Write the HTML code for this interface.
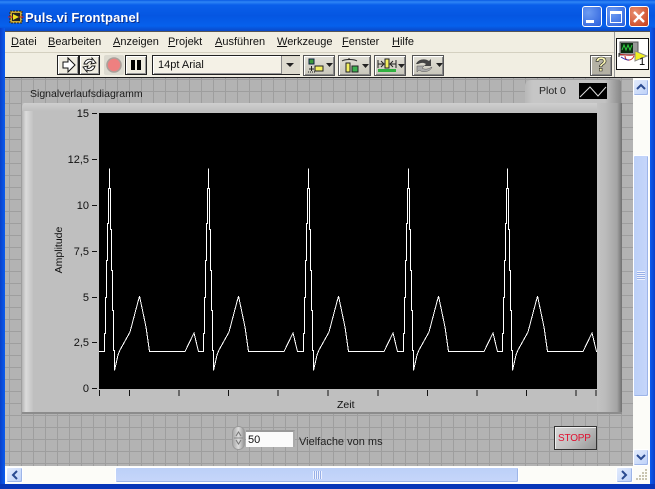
<!DOCTYPE html>
<html><head><meta charset="utf-8">
<style>
html,body{margin:0;padding:0;background:#0831d9}
#w{position:relative;width:655px;height:489px;overflow:hidden;background:#0a4fe0;font-family:"Liberation Sans",sans-serif;font-size:11px;color:#111}
#w div,#w span.a,#w svg{position:absolute}
.t{white-space:nowrap}
.btn{box-sizing:border-box;background:#efece0;border:1px solid #222;border-right-color:#222;box-shadow:inset 1px 1px 0 #fff,inset -1px -1px 0 #999}
.gb{box-sizing:border-box;background:linear-gradient(#e4e2d8,#c8c6ba);border:1px solid #555;box-shadow:inset 1px 1px 0 #fff,inset -1px -1px 0 #888}
.sb{box-sizing:border-box;background:linear-gradient(135deg,#e3ecfd,#bcd0f8);border:1px solid #fff;border-radius:2px;box-shadow:inset -1px -1px 0 #9db5e8}
u{text-decoration:underline}
</style></head><body>
<div id="w">
<!-- title -->
<div style="left:0;top:0;width:655px;height:31px;background:linear-gradient(#0a5ae4 0,#2f86f5 2px,#0a5fea 5px,#0556e2 16px,#0660ec 26px,#0a49c8 31px)"></div>
<div style="left:0;top:28px;width:5px;height:461px;background:linear-gradient(90deg,#0a3fc8,#0a5cf0)"></div>
<div style="left:650px;top:28px;width:5px;height:461px;background:linear-gradient(90deg,#0a5cf0,#0a3fc8)"></div>
<div style="left:0;top:484px;width:655px;height:5px;background:#0736b8"></div>
<svg style="left:8px;top:9px" width="16" height="16"><rect x="2" y="2" width="12" height="12" fill="#c8a838" stroke="#222" stroke-dasharray="2 1"/><rect x="4" y="4" width="8" height="8" fill="#222"/><path d="M5 5l6 3-6 3z" fill="#f0e020"/><path d="M0 8h5M11 8h5" stroke="#d02020"/></svg>
<div class="t" style="left:25px;top:10px;font-size:13px;font-weight:bold;color:#fff;letter-spacing:.1px;text-shadow:1px 1px 0 #0a2f90">Puls.vi Frontpanel</div>
<!-- window buttons -->
<div style="left:582px;top:6px;width:20px;height:21px;box-sizing:border-box;border:1px solid #fff;border-radius:3px;background:radial-gradient(circle at 30% 30%,#6d9cf2,#2a5fdc)"></div>
<div style="left:586px;top:20px;width:8px;height:3px;background:#fff"></div>
<div style="left:606px;top:6px;width:20px;height:21px;box-sizing:border-box;border:1px solid #fff;border-radius:3px;background:radial-gradient(circle at 30% 30%,#6d9cf2,#2a5fdc)"></div>
<div style="left:610px;top:11px;width:12px;height:12px;box-sizing:border-box;border:1px solid #fff;border-top-width:3px"></div>
<div style="left:629px;top:6px;width:20px;height:21px;box-sizing:border-box;border:1px solid #fff;border-radius:3px;background:radial-gradient(circle at 30% 30%,#e89070,#c83c18)"></div>
<svg style="left:629px;top:7px" width="20" height="20"><path d="M5 5l10 10M15 5L5 15" stroke="#fff" stroke-width="2.4"/></svg>
<!-- menu + toolbar -->
<div style="left:5px;top:31px;width:645px;height:47px;background:#f1eee2;border-top:1px solid #555;box-sizing:border-box"></div>
<div style="left:5px;top:52px;width:609px;height:1px;background:#d4d0c0"></div>
<div style="left:5px;top:77px;width:645px;height:1px;background:#222"></div>
<div style="left:614px;top:32px;width:1px;height:45px;background:#999"></div>
<div class="t" style="left:11px;top:36px"><u>D</u>atei</div>
<div class="t" style="left:48px;top:36px"><u>B</u>earbeiten</div>
<div class="t" style="left:113px;top:36px"><u>A</u>nzeigen</div>
<div class="t" style="left:168px;top:36px"><u>P</u>rojekt</div>
<div class="t" style="left:215px;top:36px"><u>A</u>usführen</div>
<div class="t" style="left:277px;top:36px"><u>W</u>erkzeuge</div>
<div class="t" style="left:342px;top:36px"><u>F</u>enster</div>
<div class="t" style="left:392px;top:36px"><u>H</u>ilfe</div>
<!-- run buttons -->
<div class="btn" style="left:57px;top:55px;width:22px;height:20px"></div>
<svg style="left:57px;top:55px" width="22" height="20"><path d="M6 7h5V3l7 7-7 7v-4H6z" fill="#fff" stroke="#111"/></svg>
<div class="btn" style="left:79px;top:55px;width:21px;height:20px"></div>
<svg style="left:79px;top:55px" width="21" height="20"><path d="M5 9c1-4 5-6 8-4V3l4 5-5 1 1-2c-2-1-4 0-5 2zM16 11c-1 4-5 6-8 4v2l-4-5 5-1-1 2c2 1 4 0 5-2z" fill="#fff" stroke="#111" stroke-width=".9"/></svg>
<div style="left:104px;top:55px;width:20px;height:20px;box-sizing:border-box;background:#dcdad0;border-radius:2px"></div>
<svg style="left:104px;top:55px" width="20" height="20"><circle cx="10" cy="10" r="7" fill="#ee8080" stroke="#aaa09a" stroke-width="1.6"/></svg>
<div class="btn" style="left:125px;top:55px;width:22px;height:20px"></div>
<div style="left:131px;top:60px;width:4px;height:10px;background:#000"></div>
<div style="left:137px;top:60px;width:4px;height:10px;background:#000"></div>
<!-- font combo -->
<div class="btn" style="left:152px;top:55px;width:148px;height:20px;background:#f4f1e6"></div>
<div class="t" style="left:158px;top:59px">14pt Arial</div>
<div style="left:281px;top:56px;width:18px;height:18px;background:#dedbcf;border-left:1px solid #888"></div>
<svg style="left:285px;top:62px" width="10" height="6"><path d="M1 1h8L5 5z" fill="#222"/></svg>
<!-- align buttons -->
<div class="gb" style="left:303px;top:55px;width:32px;height:21px"></div>
<svg style="left:303px;top:55px" width="32" height="21"><rect x="6" y="4" width="5" height="5" fill="#3c9a3c" stroke="#124"/><path d="M6 14h5M8.500 11v5" stroke="#222"/><path d="M5 17h8" stroke="#222" stroke-dasharray="1 1"/><rect x="12" y="11" width="8" height="5" fill="#f4f060" stroke="#222"/><path d="M23 8h7l-3.500 4z" fill="#222"/></svg>
<div class="gb" style="left:338px;top:55px;width:33px;height:21px"></div>
<svg style="left:338px;top:55px" width="33" height="21"><path d="M4 6c3-2 12-2 15 0M11 3v2" stroke="#222" fill="none"/><rect x="8" y="8" width="4" height="9" fill="#f4f060" stroke="#222"/><rect x="14" y="11" width="6" height="6" fill="#3cb050" stroke="#222"/><path d="M24 9h7l-3.500 4z" fill="#222"/></svg>
<div class="gb" style="left:374px;top:55px;width:32px;height:21px"></div>
<svg style="left:374px;top:55px" width="32" height="21"><path d="M4 9h5M17 9h5M7 6l3 3-3 3M19 6l-3 3 3 3M4 5v8M22 5v8" stroke="#222" fill="none"/><rect x="11" y="4" width="4" height="9" fill="#f4f060" stroke="#222"/><rect x="4" y="14" width="18" height="3" fill="#30b040"/><path d="M24 9h7l-3.500 4z" fill="#222"/></svg>
<div class="gb" style="left:412px;top:55px;width:32px;height:21px"></div>
<svg style="left:412px;top:55px" width="32" height="21"><path d="M4 9c2-5 9-6 13-3l2-2v7h-7l2-2c-3-2-6-1-8 0z" fill="#444"/><path d="M20 12c-2 5-9 6-13 3l-2 2v-6h7l-2 2c3 2 6 1 8 0z" fill="#aaa" stroke="#555" stroke-width=".5"/><path d="M24 8h7l-3.500 4z" fill="#222"/></svg>
<!-- help -->
<div class="gb" style="left:590px;top:55px;width:22px;height:21px;background:#b4b1a4"></div>
<div class="t" style="left:595px;top:54px;font-size:20px;color:#f8f4b0;font-weight:bold;-webkit-text-stroke:.6px #222">?</div>
<!-- VI icon -->
<div style="left:616px;top:38px;width:33px;height:32px;background:#fff;border:1px solid #111;box-sizing:border-box"></div>
<svg style="left:616px;top:38px" width="33" height="32"><rect x="4" y="4" width="18" height="13" fill="#999" stroke="#555"/><rect x="5" y="5" width="12" height="10" fill="#0a2a10"/><path d="M6 12l2-5 2 5 2-5 2 5 2-5" stroke="#30d040" fill="none"/><path d="M4 16.500c5 0 8 2 16 0M9 18c0 6 7 5 9 0" stroke="#c02020" fill="none"/><path d="M5 19c3 2 5 3 8 3" stroke="#3030b0" fill="none"/><path d="M19 13l12 5-12 5z" fill="#f0f020" stroke="#888"/><path d="M3 15v4" stroke="#222"/></svg>
<div class="t" style="left:639px;top:56px;font-size:11px;color:#000">1</div>
<!-- panel -->
<div style="left:5px;top:78px;width:628px;height:388px;background-color:#b3b3b3;background-image:linear-gradient(90deg,#9e9e9e 1px,transparent 1px),linear-gradient(#9e9e9e 1px,transparent 1px);background-size:12px 12px;background-position:4px 1px"></div>
<div class="t" style="left:30px;top:88px;font-size:10.500px;color:#1a1a1a">Signalverlaufsdiagramm</div>
<!-- legend -->
<div style="left:525px;top:80px;width:96px;height:23px;box-sizing:border-box;background:linear-gradient(90deg,#b8b8b8,#c6c6c6 8px,#c2c2c2 80px,#888);border-radius:6px 2px 0 0"></div>
<div class="t" style="left:539px;top:85px;font-size:10.500px;color:#222">Plot 0</div>
<div style="left:579px;top:83px;width:28px;height:16px;background:#000"></div>
<svg style="left:579px;top:83px" width="28" height="16"><path d="M1 14L11 4l8 9L27 4" stroke="#ddd" fill="none"/></svg>
<!-- chart frame -->
<div style="left:22px;top:103px;width:600px;height:311px;box-sizing:border-box;background:#bfbfbf;border-bottom:2px solid #8c8c8c"></div>
<div style="left:22px;top:103px;width:11px;height:309px;background:linear-gradient(90deg,#b4b4b4,#dcdcdc 4px,#c2c2c2)"></div>
<div style="left:22px;top:103px;width:600px;height:8px;background:linear-gradient(#cfcfcf,#bfbfbf);border-radius:4px 4px 0 0"></div>
<div style="left:597px;top:103px;width:25px;height:309px;background:linear-gradient(90deg,#c2c2c2,#bcbcbc 8px,#a4a4a4 20px,#707070)"></div>
<!-- plot -->
<div style="left:99px;top:113px;width:498px;height:276px;background:#000"></div>
<svg style="left:99px;top:113px" width="498" height="276" viewBox="99 113 498 276" shape-rendering="crispEdges">
<defs><path id="p" d="M99 351.500H104.500V333.500H105.500V297.500H106.500V260.500H107.500V223.500H108.500V188.500H109.500V168.500V188.500H110.500V229.500H111.500V270.500H112.500V310.500H113.500V350.500H114.500V370.500L118 355L120 350L130 332L139.500 296L146 327L149.500 351.500H185L194 333L198.500 351.500H203.500" fill="none" stroke="#fff" stroke-width="1"/></defs>
<use href="#p"/><use href="#p" x="99"/><use href="#p" x="199"/><use href="#p" x="299"/><use href="#p" x="398"/>
</svg>
<!-- y axis -->
<svg style="left:90px;top:110px" width="9" height="285"><path d="M2 3.500h5M2 49.500h5M2 95.500h5M2 141.500h5M2 187.500h5M2 232.500h5M2 278.500h5" stroke="#111"/></svg>
<div class="t" style="right:566px;top:108px;font-size:11px">15</div>
<div class="t" style="right:566px;top:154px;font-size:11px">12,5</div>
<div class="t" style="right:566px;top:200px;font-size:11px">10</div>
<div class="t" style="right:566px;top:246px;font-size:11px">7,5</div>
<div class="t" style="right:566px;top:292px;font-size:11px">5</div>
<div class="t" style="right:566px;top:337px;font-size:11px">2,5</div>
<div class="t" style="right:566px;top:383px;font-size:11px">0</div>
<div class="t" style="left:34px;top:244px;width:50px;text-align:center;transform:rotate(-90deg);font-size:10.500px">Amplitude</div>
<!-- x axis -->
<svg style="left:95px;top:389px" width="510" height="8"><path d="M4.500 1v6M34.500 1v6M84 1v6M133.500 1v6M183 1v6M233 1v6M283 1v6M332.500 1v6M382 1v6M431.500 1v6M481 1v6M501 1v6" stroke="#111"/></svg>
<div class="t" style="left:337px;top:399px;font-size:10.500px">Zeit</div>
<!-- numeric -->
<div style="left:232px;top:426px;width:13px;height:24px;background:linear-gradient(90deg,#aaa,#ddd,#999);border-radius:7px;border:1px solid #999;box-sizing:border-box"></div>
<svg style="left:232px;top:426px" width="13" height="24"><path d="M4 10l2.500-4L9 10M4 14l2.500 4L9 14" stroke="#777" fill="none"/><path d="M2 12h9" stroke="#888"/></svg>
<div style="left:246px;top:430px;width:49px;height:17px;background:#fbfbfb;box-sizing:border-box;border-top:2px solid #999;border-right:2px solid #aaa"></div>
<div class="t" style="left:248px;top:434px;font-size:11px;color:#111">50</div>
<div class="t" style="left:299px;top:436px;font-size:11px;color:#222">Vielfache von ms</div>
<!-- stop -->
<div style="left:554px;top:426px;width:43px;height:24px;box-sizing:border-box;border:1px solid #333;background:linear-gradient(135deg,#d8d8d8,#c0c0c0 50%,#969696);box-shadow:inset 1px 1px 0 #eee"></div>
<div class="t" style="left:558px;top:433px;font-size:10px;letter-spacing:-.2px;color:#e01030">STOPP</div>
<!-- v scrollbar -->
<div style="left:633px;top:78px;width:17px;height:388px;background:#fcfcf8"></div>
<div class="sb" style="left:633px;top:79px;width:16px;height:17px"></div>
<svg style="left:633px;top:79px" width="16" height="17"><path d="M4 10l4-4 4 4" stroke="#2a4a90" stroke-width="2" fill="none"/></svg>
<div class="sb" style="left:633px;top:155px;width:16px;height:242px;background:linear-gradient(90deg,#bcd0f8,#c6d6fa)"></div>
<div style="left:637px;top:271px;width:8px;height:9px;background:repeating-linear-gradient(#eef2fe 0 1px,#98b0e8 1px 2px)"></div>
<div class="sb" style="left:633px;top:449px;width:16px;height:17px"></div>
<svg style="left:633px;top:449px" width="16" height="17"><path d="M4 6l4 4 4-4" stroke="#2a4a90" stroke-width="2" fill="none"/></svg>
<!-- h scrollbar -->
<div style="left:5px;top:466px;width:645px;height:18px;background:#fcfcf8"></div>
<div class="sb" style="left:6px;top:467px;width:17px;height:16px"></div>
<svg style="left:6px;top:467px" width="17" height="16"><path d="M11 4L7 8l4 4" stroke="#2a4a90" stroke-width="2" fill="none"/></svg>
<div class="sb" style="left:115px;top:467px;width:404px;height:16px;background:linear-gradient(#bcd0f8,#c6d6fa)"></div>
<div style="left:313px;top:471px;width:9px;height:8px;background:repeating-linear-gradient(90deg,#eef2fe 0 1px,#98b0e8 1px 2px)"></div>
<div class="sb" style="left:616px;top:467px;width:17px;height:16px"></div>
<svg style="left:616px;top:467px" width="17" height="16"><path d="M6 4l4 4-4 4" stroke="#2a4a90" stroke-width="2" fill="none"/></svg>
<svg style="left:634px;top:468px" width="15" height="15"><path d="M11 2h2M8 5h2M11 5h2M5 8h2M8 8h2M11 8h2M2 11h2M5 11h2M8 11h2M11 11h2" stroke="#c8c4b0" stroke-width="2"/></svg>
</div>
</body></html>
